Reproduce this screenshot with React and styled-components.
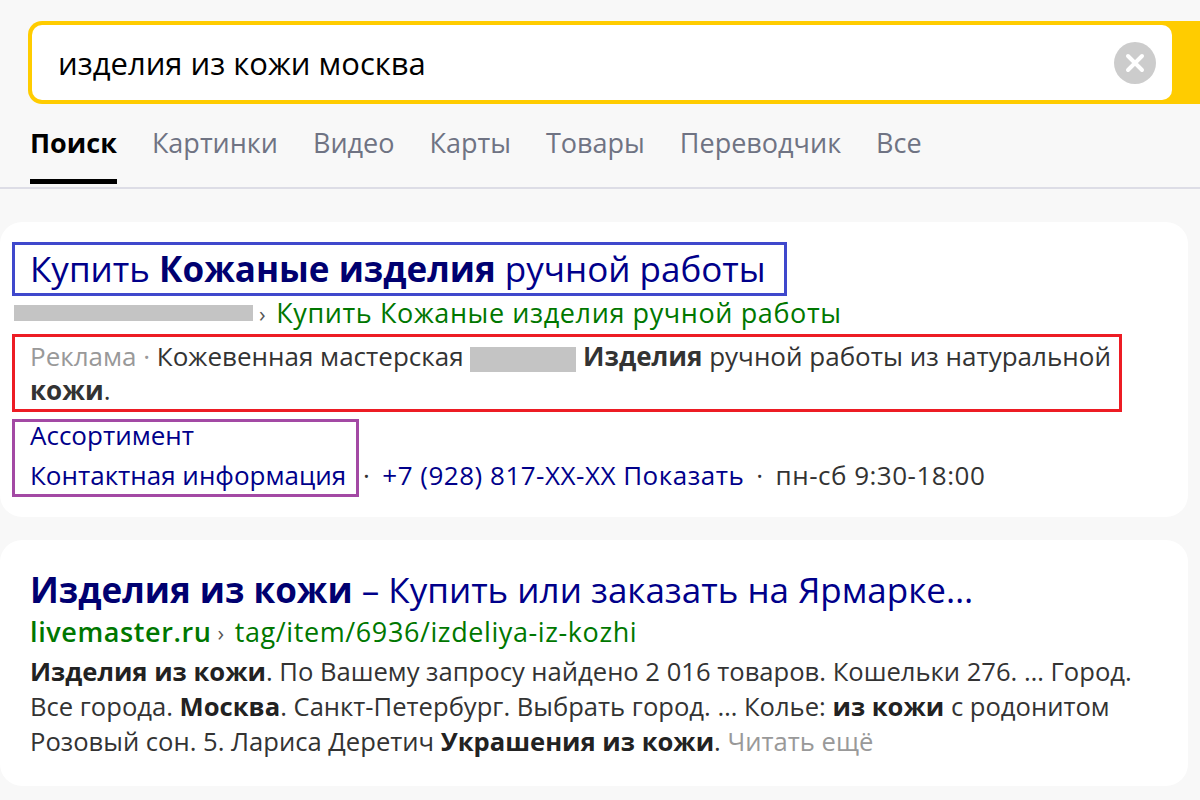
import React from 'react';
import styled, { createGlobalStyle } from 'styled-components';

const GlobalStyle = createGlobalStyle`
  html, body {
    margin: 0;
    padding: 0;
    background: #f8f8f8;
    font-family: "Open Sans", "Noto Sans", Arial, sans-serif;
    overflow: hidden;
  }
`;

const Page = styled.div`
  width: 1200px;
  height: 800px;
  padding-top: 21px;
  box-sizing: border-box;
`;

const SearchBar = styled.div`
  margin-left: 28px;
  height: 83px;
  display: flex;
  background: #ffcc00;
  padding: 4px 28px 4px 4px;
  border-radius: 14px 0 0 14px;
  box-sizing: border-box;
`;

const SearchInput = styled.div`
  flex: 1;
  display: flex;
  align-items: center;
  justify-content: space-between;
  background: #fff;
  border-radius: 10px;
  padding: 0 16px 0 26px;
  font-size: 31px;
  color: #000;
`;

const ClearButton = styled.span`
  width: 42px;
  height: 42px;
  border-radius: 50%;
  background: #cccccc;
  display: flex;
  align-items: center;
  justify-content: center;
`;

const Tabs = styled.div`
  display: flex;
  gap: 35px;
  padding-left: 30px;
  margin-top: 17px;
  border-bottom: 2px solid #dddde6;
`;

const Tab = styled.div`
  font-size: 27px;
  height: 63px;
  padding-top: 3px;
  box-sizing: border-box;
  color: ${p => (p.$active ? '#000' : '#6f7383')};
  font-weight: ${p => (p.$active ? 700 : 400)};
  border-bottom: 5px solid ${p => (p.$active ? '#000' : 'transparent')};
  margin-bottom: 3px;
`;

const Card = styled.div`
  width: 1188px;
  box-sizing: border-box;
  background: #fff;
  border-radius: 22px;
  margin-top: ${p => p.$top}px;
  padding: ${p => p.$pad};
`;

const MarkBox = styled.div`
  display: ${p => (p.$block ? 'block' : 'inline-block')};
  border: 3px solid ${p => p.$color};
  box-sizing: border-box;
`;

const AdTitle = styled(MarkBox)`
  font-size: 35px;
  line-height: 44px;
  padding: 2px 18px 2px 15px;
  color: #00008a;
  b { color: #000070; }
`;

const UrlLine = styled.div`
  display: flex;
  align-items: center;
  font-size: 27px;
  letter-spacing: 0.6px;
  line-height: 34px;
  color: #007700;
  padding-left: ${p => p.$indent || 0}px;
  margin-top: ${p => p.$gap || 0}px;
  b { font-weight: 600; }
`;

const Blur = styled.span`
  display: inline-block;
  width: ${p => p.$w}px;
  height: ${p => p.$h}px;
  background: #c4c4c4;
  vertical-align: middle;
`;

const Chevron = styled.span`
  color: #555;
  margin: 0 10px 0 6px;
  font-size: 22px;
`;

const AdText = styled(MarkBox)`
  width: 1110px;
  font-size: 26px;
  line-height: 34px;
  padding: 2px 4px 2px 15px;
  color: #333;
  margin-top: 4px;
  white-space: nowrap;
  b { font-weight: 700; }
`;

const Gray = styled.span`
  color: #999;
`;

const ContactRow = styled.div`
  display: flex;
  align-items: flex-end;
  margin-top: 7px;
  font-size: 26px;
`;

const Sitelinks = styled(MarkBox)`
  width: 347px;
  padding: 0 0 0 15px;
  color: #00008a;
  white-space: nowrap;
  div:first-child { line-height: 26px; }
  div + div { margin-top: 8px; line-height: 38px; }
`;

const ContactInfo = styled.div`
  display: flex;
  gap: 12px;
  line-height: 38px;
  padding-bottom: 3px;
  color: #333;
  padding-left: 4px;
  letter-spacing: 0.5px;
  white-space: nowrap;
  span.link { color: #00008a; }
`;

const ResultTitle = styled.div`
  font-size: 35px;
  line-height: 44px;
  color: #00008a;
  white-space: nowrap;
  b { color: #000070; }
`;

const Snippet = styled.div`
  font-size: 25.6px;
  line-height: 35px;
  color: #333;
  margin-top: 5px;
  white-space: nowrap;
  b { color: #222; }
`;

const ClearIcon = () => (
  <svg width="22" height="22" viewBox="0 0 22 22">
    <path d="M4 4 L18 18 M18 4 L4 18" stroke="#fff" strokeWidth="4" strokeLinecap="round" />
  </svg>
);

const tabs = ['Поиск', 'Картинки', 'Видео', 'Карты', 'Товары', 'Переводчик', 'Все'];

export default function App() {
  return (
    <Page>
      <GlobalStyle />
      <SearchBar>
        <SearchInput>
          изделия из кожи москва
          <ClearButton><ClearIcon /></ClearButton>
        </SearchInput>
      </SearchBar>

      <Tabs>
        {tabs.map((t, i) => (
          <Tab key={t} $active={i === 0}>{t}</Tab>
        ))}
      </Tabs>

      <Card $top={33} $pad="20px 12px 20px 12px">
        <AdTitle $color="#3f48cc">
          Купить <b>Кожаные изделия</b> ручной работы
        </AdTitle>
        <UrlLine $indent={2}>
          <Blur $w={239} $h={16} />
          <Chevron>›</Chevron>
          Купить Кожаные изделия ручной работы
        </UrlLine>
        <AdText $block $color="#ed1c24">
          <Gray>Реклама · </Gray>Кожевенная мастерская <Blur $w={106} $h={25} />{' '}
          <b>Изделия</b> ручной работы из натуральной
          <br />
          <b>кожи</b>.
        </AdText>
        <ContactRow>
          <Sitelinks $color="#a349a4">
            <div>Ассортимент</div>
            <div>Контактная информация</div>
          </Sitelinks>
          <ContactInfo>
            <span>·</span>
            <span className="link">+7 (928) 817-XX-XX Показать</span>
            <span>·</span>
            <span>пн-сб 9:30-18:00</span>
          </ContactInfo>
        </ContactRow>
      </Card>

      <Card $top={23} $pad="28px 30px 27px 30px">
        <ResultTitle>
          <b>Изделия из кожи</b> – Купить или заказать на Ярмарке…
        </ResultTitle>
        <UrlLine $gap={3}>
          <b>livemaster.ru</b>
          <Chevron>›</Chevron>
          tag/item/6936/izdeliya-iz-kozhi
        </UrlLine>
        <Snippet>
          <b>Изделия из кожи</b>. По Вашему запросу найдено 2 016 товаров. Кошельки 276. … Город.
          <br />
          Все города. <b>Москва</b>. Санкт-Петербург. Выбрать город. … Колье: <b>из кожи</b> с родонитом
          <br />
          Розовый сон. 5. Лариса Деретич <b>Украшения из кожи</b>. <Gray>Читать ещё</Gray>
        </Snippet>
      </Card>
    </Page>
  );
}
